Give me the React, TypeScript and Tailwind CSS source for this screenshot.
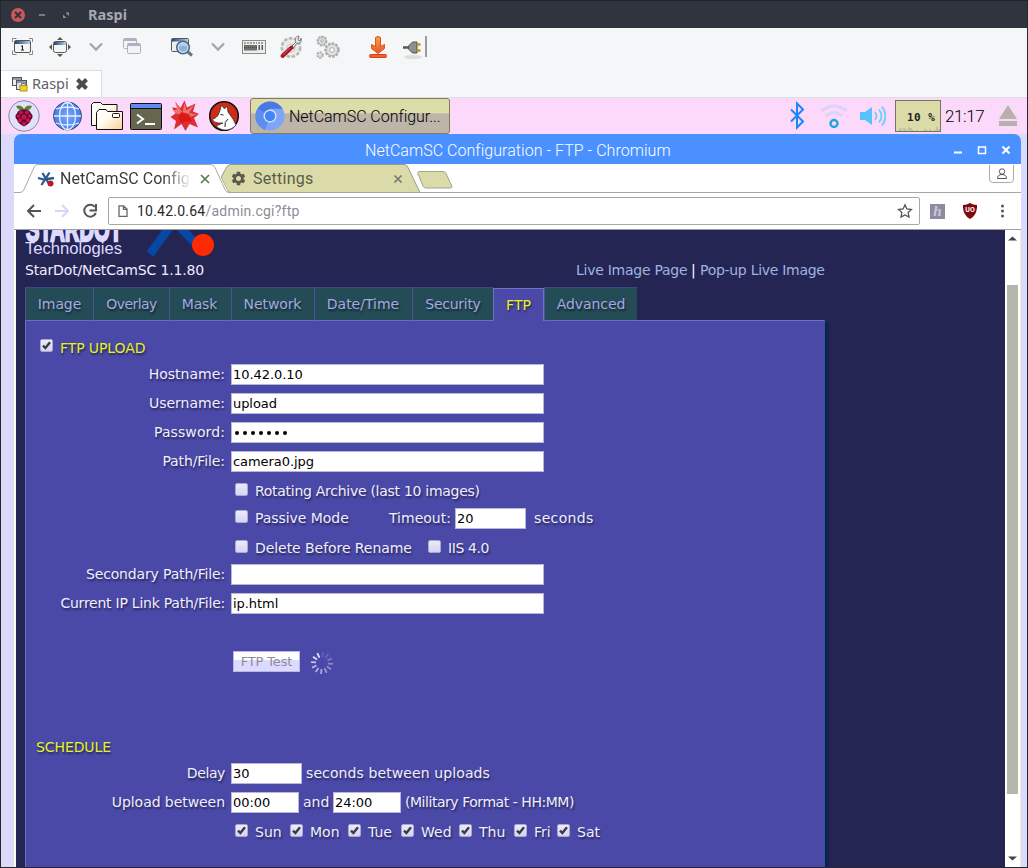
import React from "react";
import { MdSettings } from "react-icons/md";

const textShadow = "[text-shadow:1px_2px_2px_rgba(0,0,0,0.5)]";

function Check({ on = false }: { on?: boolean }) {
  return (
    <span className="relative block h-[13px] w-[13px] shrink-0 rounded-[2px] border border-[#a9a8cf] bg-gradient-to-b from-[#eceafc] to-[#d6d4f2]">
      {on && (
        <svg className="absolute -left-px -top-px" width="13" height="13" viewBox="0 0 13 13">
          <path d="M3 6.600 L5.400 9 L10 3.200" fill="none" stroke="#3c3c3c" strokeWidth="2.400" />
        </svg>
      )}
    </span>
  );
}

function Field({ value, width }: { value: string; width: string }) {
  return (
    <div
      className={`${width} h-[21px] shrink-0 border border-[#b9b7d6] bg-white pl-[1px] text-[13px] leading-[20px] tracking-[-0.060px] text-black [text-shadow:none] whitespace-pre`}
    >
      {value}
    </div>
  );
}

function Label({ children, track = "" }: { children: React.ReactNode; track?: string }) {
  return <div className={`w-[199px] shrink-0 text-right ${track}`}>{children}</div>;
}

function Option({ label, width, on = false, track = "" }: { label: string; width: string; on?: boolean; track?: string }) {
  return (
    <div className={`${width} flex shrink-0 items-center gap-[7px]`}>
      <div className="pb-[4px]">
        <Check on={on} />
      </div>
      <span className={track}>{label}</span>
    </div>
  );
}

const row = "flex h-[29px] items-center whitespace-nowrap";

function MenuIcons() {
  return (
    <svg width="430" height="42" viewBox="1 28 430 42" fill="none">
      <defs>
        <linearGradient id="win" x1="0" x2="1"><stop stopColor="#22457c" /><stop offset="1" stopColor="#b9cde6" /></linearGradient>
        <linearGradient id="down" x1="0" y1="0" x2="0" y2="1"><stop stopColor="#f9a04c" /><stop offset="1" stopColor="#e8562a" /></linearGradient>
      </defs>
      <path d="M12.500 42v-3.500h4M29 38.500h3.500v3.500M12.500 50.500v4h4M29 54.500h3.500v-4" stroke="#888a85" />
      <rect x="14.500" y="40.500" width="16" height="12" rx="1.500" fill="#f4f5f4" stroke="#555753" />
      <rect x="15" y="41" width="15" height="3" fill="url(#win)" />
      <path d="M21 46.500l1.500-.8V50M21 50h3" stroke="#222" />
      <rect x="53.500" y="41.500" width="13" height="11" rx="2" fill="#f4f5f4" stroke="#555753" />
      <rect x="54" y="42" width="12" height="3" fill="url(#win)" />
      <path d="M57 40l3-3 3 3zM57 54l3 3 3-3zM52 44l-3 3 3 3zM68 44l3 3-3 3z" fill="#555753" />
      <path d="M90 43.500l6 6 6-6M212 43.500l6 6 6-6" stroke="#a4a6a8" strokeWidth="2.300" />
      <g opacity=".55">
        <rect x="123.500" y="38.500" width="13" height="10" rx="1" fill="#f3f4f5" stroke="#777a80" />
        <path d="M124 40h12" stroke="#6a7da0" strokeWidth="2" />
        <rect x="127.500" y="43.500" width="13" height="10" rx="1" fill="#f3f4f5" stroke="#777a80" />
        <path d="M128 45h12" stroke="#6a7da0" strokeWidth="2" />
      </g>
      <rect x="171.500" y="38.500" width="17" height="13" rx="1" fill="#eef0f0" stroke="#555753" />
      <rect x="172" y="39" width="16" height="2.500" fill="url(#win)" />
      <path d="M188 52l4 3.500" stroke="#6d7680" strokeWidth="3" />
      <circle cx="183" cy="47.500" r="6.300" fill="#8fb2d8" stroke="#4c6684" strokeWidth="1.500" />
      <circle cx="183" cy="47.500" r="4.800" stroke="#dce9f5" />
      <path d="M180 46c2-2 4-2 6 0" stroke="#c6daf0" strokeWidth="1.500" />
      <rect x="242.500" y="40.500" width="23" height="13" fill="#eeefed" stroke="#8a8c88" />
      <path d="M244 43h13M258 43h6" stroke="#555" strokeDasharray="2 1" strokeWidth="1.200" />
      <rect x="244" y="45" width="13" height="5.500" fill="#6d6f6c" />
      <path d="M258.500 47.500h2M261.500 47.500h2" stroke="#555753" strokeWidth="5" strokeDasharray="1.500 .5" />
      <path d="M244 47.500h13" stroke="#4a4c49" strokeWidth="1" strokeDasharray="1 1" />
      <circle cx="291" cy="47.500" r="9" fill="#e3e4e3" stroke="#b5b7b4" strokeWidth="3" strokeDasharray="3.500 1.500" />
      <circle cx="291" cy="47.500" r="8" fill="#e9eae9" />
      <circle cx="291" cy="48" r="4" stroke="#c4c6c3" fill="#f5f5f5" />
      <path d="M291 47l5-5c-2-4 1-6 3-6l-1 4 2 1 1-3c1 4-1 6-4 5l-4 6z" fill="#e8e9e8" stroke="#777" />
      <path d="M282.500 56l9-8.500" stroke="#a81925" strokeWidth="4" strokeLinecap="round" />
      <path d="M283 54.500l7-6.500" stroke="#db5560" />
      <g stroke="#a9abaa" fill="#e1e2e1">
        <circle cx="322" cy="41" r="4.300" strokeWidth="2.200" strokeDasharray="2.200 1" />
        <circle cx="322" cy="41" r="3.700" strokeWidth=".8" /><circle cx="322" cy="41" r="1.300" fill="#fff" />
        <circle cx="332" cy="50" r="6.500" strokeWidth="2.500" strokeDasharray="2.500 1.200" />
        <circle cx="332" cy="50" r="5.700" strokeWidth=".8" /><circle cx="332" cy="50" r="2.300" fill="#fff" />
        <circle cx="320" cy="55" r="2.700" strokeWidth="2" strokeDasharray="2 1" />
      </g>
      <path d="M375.500 37.500q2.500-2 5 0v9l4-2v4l-6.500 5-6.500-5v-4l4 2z" fill="url(#down)" stroke="#d9541e" strokeLinejoin="round" />
      <rect x="369.500" y="54.500" width="17" height="3" rx="1" fill="#f1602d" stroke="#d2431a" />
      <ellipse cx="413" cy="57" rx="9" ry="2" fill="#dcdddd" />
      <path d="M403 47.500h6" stroke="#555753" strokeWidth="2.500" />
      <path d="M408.500 46l4-4h4.500v11h-4.500l-4-4z" fill="#8e908c" stroke="#50524e" />
      <path d="M417.500 44.500h3M417.500 50.500h3" stroke="#b59b00" strokeWidth="2.500" />
      <path d="M426 36v21" stroke="#9a9c9a" strokeWidth="2" />
    </svg>
  );
}

function LauncherIcons() {
  return (
    <svg width="249" height="36" viewBox="1 98 249 36" fill="none">
      <defs>
        <linearGradient id="fold" x1="0" y1="0" x2="1" y2="1"><stop offset=".4" stopColor="#fffdf5" /><stop offset="1" stopColor="#fbcf95" /></linearGradient>
        <radialGradient id="glb"><stop stopColor="#7fa7fa" /><stop offset="1" stopColor="#457be8" /></radialGradient>
      </defs>
      <circle cx="24" cy="116" r="15.300" fill="#e2e0fa" stroke="#8a8a9c" />
      <path d="M24 111c-4-.5-7-2-8-5 3-1.500 7 0 8 3.500 1-3.500 5-5 8-3.500-1 3-4 5-8 5z" fill="#56843a" />
      <path d="M24 109.500c4 0 6 1 7 4 2 1 2 5 0 6-1 4-4 5-7 7-3-2-6-3-7-7-2-1-2-5 0-6 1-3 3-4 7-4z" fill="#5d0a28" />
      <g fill="#c2144f">
        <circle cx="21" cy="112.500" r="2" /><circle cx="27" cy="112.500" r="2" /><circle cx="24" cy="117" r="2.600" />
        <circle cx="18.500" cy="116" r="1.800" /><circle cx="29.500" cy="116" r="1.800" /><circle cx="20" cy="120.500" r="2.200" />
        <circle cx="28" cy="120.500" r="2.200" /><circle cx="24" cy="123.500" r="1.900" />
      </g>
      <circle cx="67.500" cy="116" r="14" fill="url(#glb)" stroke="#35507c" />
      <g stroke="#e2f0ff" strokeWidth="1.300">
        <path d="M54 116h27M67.500 102.500v27M56 109q11.500-4 23 0M56 123q11.500 4 23 0" />
        <ellipse cx="67.500" cy="116" rx="8" ry="13.500" />
      </g>
      <path d="M91.500 125.500v-21l2-2h7l2 2h14.500v21z" fill="url(#fold)" stroke="#111" strokeLinejoin="round" />
      <path d="M96.500 129.500v-17l2.500-3h7l1.500 2h15v18z" fill="url(#fold)" stroke="#111" strokeLinejoin="round" />
      <rect x="112.500" y="113.500" width="7" height="4" rx="1" fill="#fff" stroke="#111" />
      <rect x="130.500" y="103.500" width="31" height="26" rx="1" fill="#65664f" stroke="#111" />
      <rect x="131" y="104" width="30" height="4" fill="#5f8af2" /><path d="M131 108.500h30" stroke="#111" />
      <path d="M137 114.500l6 4.500-6 4.500M145 124h10" stroke="#fff" strokeWidth="2" />
      <path d="M175 101.500l5.500 6.500 4-7.500 2.500 7 8.500-4-2.500 8 6 2.500-5 4 4 9.500-8.500-3.500-4 7-4-7-7.500 5.500 2-8.500-5.500-4 5-3.500-3.500-6 5.500.5z" fill="#dc2f34" />
      <path d="M175.500 102.500l7 10 2-9.500 2 7.500 8-6-5.500 8.500 8 1.500-9 3-5-3-7-1-4-3.500 4.500 0z" fill="#f29a92" opacity=".65" />
      <path d="M181 112l8 2 3 8-6-1-4 2-4-5z" fill="#dd1512" opacity=".9" />
      <circle cx="224" cy="116" r="14.300" fill="#cf2b16" stroke="#111" strokeWidth="1.500" />
      <path d="M212 119.500q3-.5 6-4l2-5 1.500-5.500 3 4 2.500-3 1 6 5 7 3 6c-5 6-14 7-20 1l7-3-5 0q-4-.5-6-3.500z" fill="#fff" stroke="#222" strokeWidth=".7" />
      <path d="M220.500 114.500l3 .5M225 127q-1-5 3-8" stroke="#222" />
    </svg>
  );
}

function Tray() {
  return (
    <svg width="100" height="36" viewBox="786 98 100 36" fill="none">
      <path d="M791 109.500l12 12-6 6v-24l6 6-12 12" stroke="#1c86f5" strokeWidth="2" />
      <g stroke="#dcd2fa" strokeWidth="3">
        <path d="M821.500 111q12.500-10 25 0M826 116q8-7 16 0" />
      </g>
      <circle cx="834" cy="123.500" r="3.500" stroke="#1ba6df" strokeWidth="2.400" />
      <path d="M860 112h5l7-5v18l-7-5h-5z" fill="#52c4fb" />
      <g stroke="#6fcefa" strokeWidth="1.800">
        <path d="M875 112q3 4 0 8M879 109.500q5 6.500 0 13M882 106.500q7 9.500 0 19" />
      </g>
    </svg>
  );
}

function StarDotMark({ className }: { className: string }) {
  return (
    <svg className={className} width="18" height="18" viewBox="0 0 18 18">
      <path d="M1 8l6 1.500L17 8M5.500 3l6 10M12.500 2.500l-8 12.500" stroke="#2c5a8c" strokeWidth="2.300" fill="none" />
      <circle cx="13.500" cy="13.500" r="3" fill="#b51c28" />
    </svg>
  );
}

const tabs: [string, string, string][] = [
  ["Image", "w-[68px]", "tracking-[-0.100px]"],
  ["Overlay", "w-[76px]", "tracking-[-0.550px]"],
  ["Mask", "w-[62px]", "tracking-[-0.150px] pr-[2px]"],
  ["Network", "w-[83px]", "tracking-[-0.100px] pr-px"],
  ["Date/Time", "w-[98px]", "pr-px"],
  ["Security", "w-[81px]", "tracking-[-0.280px]"],
  ["FTP", "w-[51px]", ""],
  ["Advanced", "w-[93px]", "tracking-[-0.060px]"],
];

const days: [string, string][] = [
  ["Sun", "w-[55px]"],
  ["Mon", "w-[58px]"],
  ["Tue", "w-[53px]"],
  ["Wed", "w-[58px]"],
  ["Thu", "w-[55px]"],
  ["Fri", "w-[43px]"],
  ["Sat", "w-[50px]"],
];

const spokes = [0.15, 0.2, 0.3, 0.4, 0.45, 0.5, 0.6, 0.65, 0.7, 0.8, 0.9, 1];

function Spinner() {
  return (
    <svg width="24" height="24" viewBox="-12 -12 24 24">
      {spokes.map((o, i) => (
        <path key={i} d="M0-6v-5" stroke="#e8e6ff" strokeWidth="1.800" opacity={o} transform={`rotate(${i * 30 + 5})`} />
      ))}
    </svg>
  );
}

function AdminPage() {
  return (
    <div className="flex w-[989px] shrink-0 flex-col overflow-hidden bg-[#252554] pl-[9px] font-['DejaVu_Sans',sans-serif] text-[14px] leading-[17px] text-[#efedff]">
      <svg className="shrink-0" width="203" height="32" viewBox="25 230 203 32">
        <g transform="translate(26 240.500) scale(1 1.600)">
          <text x="0" y="0" fontFamily="'Liberation Sans', sans-serif" fontSize="22" fontWeight="700" textLength="96" lengthAdjust="spacingAndGlyphs" fill="#dcdaff" stroke="#dcdaff" strokeWidth="1.500">STARDOT</text>
        </g>
        <text x="25" y="254" fontFamily="'Liberation Sans', sans-serif" fontSize="16" textLength="97" lengthAdjust="spacingAndGlyphs" fill="#dcdaff">Technologies</text>
        <path d="M150 254L174 221L202 250" fill="none" stroke="#0747a6" strokeWidth="8.500" />
        <circle cx="203" cy="245" r="11" fill="#ff2a00" />
      </svg>
      <div className="flex h-[25px] shrink-0 items-start whitespace-nowrap">
        <span className="w-[551px] tracking-[-0.150px]">StarDot/NetCamSC 1.1.80</span>
        <span className="w-[115px] tracking-[-0.260px] text-[#9fb4e0]">Live Image Page</span>
        <span className="w-[9px] text-white">|</span>
        <span className="tracking-[-0.290px] text-[#9fb4e0]">Pop-up Live Image</span>
      </div>
      <div className="z-10 -mb-px flex h-[34px] shrink-0">
        {tabs.map(([name, w, track]) =>
          name === "FTP" ? (
            <div key={name} className={`${w} mt-px flex shrink-0 items-center justify-center border border-b-0 border-[#7272c4] bg-[#4a49a8] text-[#e6f21c] ${textShadow}`}>
              {name}
            </div>
          ) : (
            <div key={name} className={`${w} ${track} flex shrink-0 items-center justify-center border border-r-0 border-t-[#3c4a82] border-b-[#6d6dbd] border-l-[#4b519c] bg-[#244c56] text-[#a3a8e0] ${textShadow}`}>
              {name}
            </div>
          ),
        )}
      </div>
      <div className={`w-[800px] flex-1 border border-b-0 border-[#7070c0] border-r-[#2c5c8c] bg-[#4a49a8] shadow-[3px_3px_3px_#06204e] ${textShadow}`}>
        <div className="flex h-[39px] items-end gap-[7px] pb-[3px] pl-[14px] text-[#e6f21c]">
          <div className="pb-[5px]"><Check on /></div>
          <span className="tracking-[-0.100px]">FTP UPLOAD</span>
        </div>
        <div className={row}><Label>Hostname:</Label><div className="w-[6px]" /><Field value="10.42.0.10" width="w-[313px]" /></div>
        <div className={row}><Label>Username:</Label><div className="w-[6px]" /><Field value="upload" width="w-[313px]" /></div>
        <div className={row}>
          <Label track="tracking-[0.100px]">Password:</Label>
          <div className="w-[6px]" />
          <div className="flex h-[21px] w-[313px] items-center gap-[4px] border border-[#b9b7d6] bg-white pl-[3px]">
            {[0, 1, 2, 3, 4, 5, 6].map((i) => <span key={i} className="h-[4px] w-[4px] rounded-full bg-black" />)}
          </div>
        </div>
        <div className={row}><Label track="tracking-[-0.100px]">Path/File:</Label><div className="w-[6px]" /><Field value="camera0.jpg" width="w-[313px]" /></div>
        <div className={`${row} pl-[209px] pt-[2px]`}><Option label="Rotating Archive (last 10 images)" width="w-[300px]" track="tracking-[-0.280px]" /></div>
        <div className="flex h-[27px] items-center whitespace-nowrap pl-[209px]">
          <Option label="Passive Mode" width="w-[154px]" track="tracking-[-0.050px]" />
          <span className="w-[66px]">Timeout:</span>
          <Field value="20" width="w-[71px]" />
          <span className="pl-[8px] tracking-[0.350px]">seconds</span>
        </div>
        <div className="flex h-[28px] items-center whitespace-nowrap pl-[209px] pt-[4px]">
          <Option label="Delete Before Rename" width="w-[193px]" track="tracking-[-0.060px]" />
          <Option label="IIS 4.0" width="w-[80px]" track="tracking-[-0.400px]" />
        </div>
        <div className={row}><Label track="tracking-[-0.160px]">Secondary Path/File:</Label><div className="w-[6px]" /><Field value="" width="w-[313px]" /></div>
        <div className={row}><Label track="tracking-[-0.240px]">Current IP Link Path/File:</Label><div className="w-[6px]" /><Field value="ip.html" width="w-[313px]" /></div>
        <div className="mt-[29px] flex h-[29px] items-center pl-[207px]">
          <div className="flex h-[21px] w-[67px] items-center justify-center border border-[#b9b7e8] bg-[linear-gradient(#ffffff_40%,#dcdaff_45%)] text-[13px] tracking-[-0.150px] text-[#8d8c9c] [text-shadow:none]">FTP Test</div>
          <div className="w-[10px]" />
          <div className="pt-[3px]"><Spinner /></div>
        </div>
        <div className="mt-[57px] flex h-[26px] items-center pl-[10px] pt-[3px] tracking-[-0.100px] text-[#e6f21c]">SCHEDULE</div>
        <div className={row}><Label track="tracking-[-0.400px]">Delay</Label><div className="w-[6px]" /><Field value="30" width="w-[71px]" /><span className="pl-[4px] tracking-[0.100px]">seconds between uploads</span></div>
        <div className={row}>
          <Label track="tracking-[-0.060px]">Upload between</Label>
          <div className="w-[6px]" />
          <Field value="00:00" width="w-[68px]" />
          <span className="w-[34px] pl-[4px]">and</span>
          <Field value="24:00" width="w-[68px]" />
          <span className="pl-[4px] tracking-[-0.460px]">(Military Format - HH:MM)</span>
        </div>
        <div className={`${row} pl-[209px] pt-[2px]`}>
          {days.map(([d, w]) => <Option key={d} label={d} width={w} on />)}
        </div>
      </div>
    </div>
  );
}

function Browser() {
  return (
    <div className="ml-[13px] mr-[6px] flex min-h-0 flex-1 flex-col overflow-hidden rounded-t-[7px] bg-white font-['Roboto',sans-serif]">
      <div className="flex h-[30px] shrink-0 items-center bg-[#4a90ff] text-white">
        <div className="w-[351px] shrink-0" />
        <span className="w-[585px] shrink-0 whitespace-nowrap pt-[3px] text-[16px] font-light tracking-[0.040px]">NetCamSC Configuration - FTP - Chromium</span>
        <svg className="shrink-0" width="60" height="30" viewBox="950 134 60 30" fill="none" stroke="#fff">
          <path d="M954 152.500h8" strokeWidth="2" />
          <rect x="978.500" y="147" width="7" height="6.500" strokeWidth="1.500" />
          <path d="M1002.500 146.500l7 7M1009.500 146.500l-7 7" strokeWidth="2" />
        </svg>
      </div>
      <div className="relative flex h-[29px] shrink-0">
        <svg className="absolute left-0 top-0" width="1007" height="29" viewBox="14 164 1007 29" fill="none">
          <path d="M230 164.500h174q3 0 4 3l12 25h-189q-3 0-4-3l-5-10q-1-2 0-4l5-9z" fill="#dadba8" stroke="#9a9a8a" />
          <path d="M210 166l4 0 8 14 6 12H16V166z" fill="#fff" />
          <path d="M14 192.500h6q3 0 4-3l10-22q1-3 4-3h172q4 0 5 3l10 22q1 3 4 3h794" stroke="#a9a8a0" />
          <path d="M419 171.500h24q2 0 3 2l6 13q0 1.500-2 1.500h-24q-2 0-3-2l-5-12q-1-2 1-2.500z" fill="#dadba8" stroke="#a3a393" />
          <path d="M989.500 165v14q0 3.500 3 3.500h18q3 0 3-3.500v-14" stroke="#aaa" />
          <circle cx="1002" cy="171.500" r="2.700" stroke="#555" />
          <path d="M997.500 178.500q0-4 4.500-4t4.500 4z" stroke="#555" />
        </svg>
        <div className="relative z-10 flex items-center pl-[23px] text-[16px] text-[#3b3b3d]">
          <StarDotMark className="shrink-0" />
          <span className="ml-[5px] w-[132px] overflow-hidden whitespace-nowrap tracking-[0.060px] [mask-image:linear-gradient(90deg,#000_78%,transparent)]">NetCamSC Configuration</span>
          <svg className="ml-[8px]" width="10" height="10" viewBox="0 0 10 10"><path d="M1 1l8 8M9 1l-8 8" stroke="#587a4c" strokeWidth="1.700" /></svg>
          <MdSettings className="ml-[20px]" size={17} color="#59594f" />
          <span className="ml-[6px] w-[140px] tracking-[0.260px] text-[#5a5b4a]">Settings</span>
          <svg width="10" height="10" viewBox="0 0 10 10"><path d="M1.500 1.500l7 7M8.500 1.500l-7 7" stroke="#77777a" strokeWidth="1.700" /></svg>
        </div>
      </div>
      <div className="flex h-[37px] shrink-0 items-center border-b border-[#9d9da6]">
        <svg className="shrink-0" width="94" height="36" viewBox="14 193 94 36" fill="none" strokeWidth="2">
          <path d="M41 211H28.500M34 205l-6 6 6 6" stroke="#555" />
          <path d="M55 211h13M62 205l6 6-6 6" stroke="#d8d6f6" />
          <path d="M95 207a6 6 0 1 0 .8 6M96 204v6.500h-6.500" stroke="#555" />
        </svg>
        <div className="flex h-[28px] w-[812px] shrink-0 items-center rounded-[2px] border border-[#a8a89c] bg-white pl-[9px] text-[14px] text-[#8d8d96]">
          <svg className="shrink-0" width="10" height="12" viewBox="0 0 10 12" fill="none" stroke="#666"><path d="M1 .800h4.500L9 4v7.500H1zM5.500 .800V4.300H9" strokeWidth="1.300" /></svg>
          <span className="ml-[9px] w-[760px] shrink-0 tracking-[0.230px]"><span className="text-[#28282c]">10.42.0.64</span>/admin.cgi?ftp</span>
          <svg className="shrink-0" width="16" height="16" viewBox="0 0 16 16"><path d="M8 1.800l1.900 4.200 4.500.5-3.300 3.100.9 4.500L8 11.900l-4 2.200.9-4.500L1.600 6.500l4.500-.5z" fill="none" stroke="#555" strokeWidth="1.300" /></svg>
        </div>
        <div className="ml-[10px] flex h-[15px] w-[15px] shrink-0 items-center justify-center bg-[#8d8c9f] font-['Liberation_Serif',serif] text-[15px] font-bold italic leading-[15px] text-[#c9c8dc]">h</div>
        <div className="relative ml-[18px] flex h-[16px] w-[14px] shrink-0 items-center justify-center text-[7px] font-bold text-white">
          <svg className="absolute left-0 top-0" width="14" height="16" viewBox="0 0 14 16"><path d="M7 0Q10 2 14 2Q14.500 12 7 16Q-.500 12 0 2Q4 2 7 0z" fill="#800610" /></svg>
          <span className="relative -top-px">UO</span>
        </div>
        <svg className="ml-[23px] shrink-0" width="6" height="16" viewBox="0 0 6 16" fill="#555"><circle cx="2.500" cy="3" r="1.500" /><circle cx="2.500" cy="8" r="1.500" /><circle cx="2.500" cy="13" r="1.500" /></svg>
      </div>
      <div className="flex min-h-0 flex-1 border-l-2 border-[#fdfce6]">
        <AdminPage />
        <div className="flex w-[16px] shrink-0 flex-col items-center border-r border-[#eeeec8] bg-white">
          <svg className="mt-[6px] shrink-0" width="9" height="5" viewBox="0 0 9 5"><path d="M0 4.500L4.500 .5L9 4.500z" fill="#444" /></svg>
          <div className="mt-[44px] h-[509px] w-[11px] shrink-0 bg-[#b6b7ac]" />
          <svg className="mt-[62px] shrink-0" width="9" height="5" viewBox="0 0 9 5"><path d="M0 .5L4.500 4.500L9 .5z" fill="#444" /></svg>
        </div>
      </div>
    </div>
  );
}

export default function App() {
  return (
    <div className="flex h-[868px] w-[1028px] flex-col overflow-hidden border border-t-0 border-[#262830] bg-[#dcdafc]">
      <div className="flex h-[28px] shrink-0 items-center border-t border-[#1f222a] bg-[#2f343f]">
        <svg width="87" height="28" viewBox="1 0 87 28" fill="none">
          <circle cx="18" cy="14" r="7" fill="#cc575d" />
          <path d="M15 11l6 6M21 11l-6 6" stroke="#2f343f" strokeWidth="2" />
          <path d="M39 14h6" stroke="#90939b" strokeWidth="1.500" />
          <path d="M65.500 11.500h3.500v3.500zM63 13.500v3.500h3.500z" fill="#90939b" />
        </svg>
        <span className="pb-[2px] font-['Noto_Sans',sans-serif] text-[14.500px] font-bold leading-[20px] text-[#a5a8b0]">Raspi</span>
      </div>
      <div className="h-[42px] shrink-0 bg-[#f5f6f7]"><MenuIcons /></div>
      <div className="flex h-[28px] shrink-0 border-b border-[#dcdfe3] bg-[#f5f6f7]">
        <div className="flex w-[101px] shrink-0 items-center border-r border-t border-[#dcdfe3] bg-white pl-[11px]">
          <svg width="16" height="16" viewBox="0 0 16 16" fill="none">
            <rect x=".5" y="1.500" width="9" height="8" fill="#eee" stroke="#555" /><rect x="4.500" y="4.500" width="10" height="9" fill="#d9e2ec" stroke="#555" />
            <path d="M1 3h8M5 6h9" stroke="#35507c" /><rect x="8" y="9.500" width="7" height="5.500" fill="#f0cf29" stroke="#b9940c" /><path d="M9.500 9V7.500h4V9" stroke="#777" />
          </svg>
          <span className="ml-[4px] w-[43px] pb-[2px] font-['Noto_Sans',sans-serif] text-[14.500px] leading-[20px] text-[#5c616c]">Raspi</span>
          <svg width="14" height="14" viewBox="0 0 14 14"><path d="M2.500 2.500l9 9M11.500 2.500l-9 9" stroke="#4d4d4d" strokeWidth="4" /></svg>
        </div>
      </div>
      <div className="flex h-[36px] shrink-0 items-center bg-[#fcd8fb] font-['Roboto',sans-serif] text-[#222]">
        <LauncherIcons />
        <div className="flex h-[36px] w-[200px] shrink-0 items-center overflow-hidden rounded-[3px] border border-[#85785f] bg-[linear-gradient(#dcdda8_42%,#bdb5a8_43%)] pl-[4px]">
          <svg className="shrink-0" width="30" height="30" viewBox="0 0 30 30">
            <circle cx="15" cy="15" r="14.500" fill="#7ea6f7" />
            <path d="M15 15L2.500 7.700A14.500 14.500 0 0 1 27.600 7.800H15z" fill="#4978e5" />
            <path d="M15 15l-5 14A14.500 14.500 0 0 1 2.500 7.700z" fill="#5e8cef" />
            <circle cx="15" cy="15" r="6.500" fill="#dfe6ff" /><circle cx="15" cy="15" r="5.200" fill="#4285f4" />
          </svg>
          <span className="ml-[4px] whitespace-nowrap pt-px text-[16px] font-light tracking-[-0.040px] text-black">NetCamSC Configur...</span>
        </div>
        <div className="w-[336px] shrink-0" />
        <Tray />
        <div className="ml-[9px] flex h-[32px] w-[46px] shrink-0 flex-col justify-between overflow-hidden border border-[#77745f] bg-[#dadba6] font-['DejaVu_Sans_Mono',monospace] text-[11px] font-bold">
          <span className="whitespace-pre pl-[11px] pt-[9px] leading-[16px] text-[#222] tracking-[0.500px]">10 %</span>
          <svg width="44" height="5" viewBox="0 0 44 5" fill="none" stroke="#aaa994"><path d="M3 5V3M5 5V2M8 5V2M10 5V3M13 5V1M15 5V2M17 5V4M21 5V4M29 5V3M31 5V4M34 5V3M39 5V4M41 5V1M43 5V3" /></svg>
        </div>
        <span className="ml-[4px] w-[54px] shrink-0 pt-px text-[17px] font-light tracking-[-0.400px] text-black">21:17</span>
        <svg className="shrink-0" width="18" height="24" viewBox="0 0 18 24" fill="#b8b0aa"><path d="M9 1l9 14H0zM0 17h18v5H0z" /></svg>
      </div>
      <Browser />
    </div>
  );
}
